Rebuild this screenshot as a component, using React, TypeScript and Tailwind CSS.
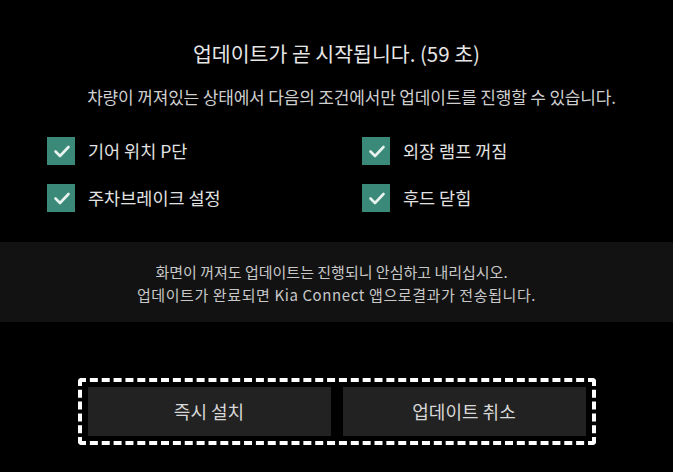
import React from 'react';

const conditions = ['기어 위치 P단', '외장 램프 꺼짐', '주차브레이크 설정', '후드 닫힘'];

function CheckBox() {
  return (
    <div className="w-[28px] h-[28px] bg-[#3b8a79] flex items-center justify-center shrink-0">
      <svg width="28" height="28" viewBox="0 0 28 28" fill="none">
        <path
          d="M8.5 14.5 L13 19 L21.5 10"
          stroke="#e8f2ef"
          strokeWidth="2.6"
          strokeLinecap="round"
          strokeLinejoin="round"
        />
      </svg>
    </div>
  );
}

export default function App() {
  return (
    <div
      className="w-[673px] h-[472px] bg-black flex flex-col items-center overflow-hidden"
      style={{ fontFamily: '"Noto Sans CJK KR", "Noto Sans", sans-serif' }}
    >
      {/* 제목 */}
      <h1 className="mt-[39px] text-[20.5px] leading-[28px] text-[#e6e6e6] font-normal">
        업데이트가 곧 시작됩니다. (59 초)
      </h1>
      <p className="mt-[18px] ml-[30px] text-[17px] leading-[24px] tracking-[-0.01em] text-[#cfcfcf]">
        차량이 꺼져있는 상태에서 다음의 조건에서만 업데이트를 진행할 수 있습니다.
      </p>

      {/* 조건 목록 */}
      <div className="mt-[28px] w-full pl-[47px] grid grid-cols-[315px_1fr] gap-y-[19px]">
        {conditions.map((c) => (
          <div key={c} className="flex items-center gap-[13px]">
            <CheckBox />
            <span className="text-[17.5px] leading-[28px] text-[#e2e2e2]">{c}</span>
          </div>
        ))}
      </div>

      {/* 안내 */}
      <div className="mt-[30px] w-full h-[80px] bg-[#121212] flex flex-col items-center justify-center pt-[2px] text-[15px] leading-[23px] text-[#c8c8c8]">
        <p className="mr-[10px]">화면이 꺼져도 업데이트는 진행되니 안심하고 내리십시오.</p>
        <p className="tracking-[0.04em]">업데이트가 완료되면 Kia Connect 앱으로결과가 전송됩니다.</p>
      </div>

      {/* 버튼 */}
      <div className="mt-[56px] border-[4px] border-dashed border-white rounded-[4px] px-[6px] py-[5px] flex gap-[12px]">
        <button className="w-[243px] h-[49px] bg-[#222222] text-[18px] text-[#d8d8d8]">
          즉시 설치
        </button>
        <button className="w-[243px] h-[49px] bg-[#222222] text-[18px] text-[#d8d8d8]">
          업데이트 취소
        </button>
      </div>
    </div>
  );
}
